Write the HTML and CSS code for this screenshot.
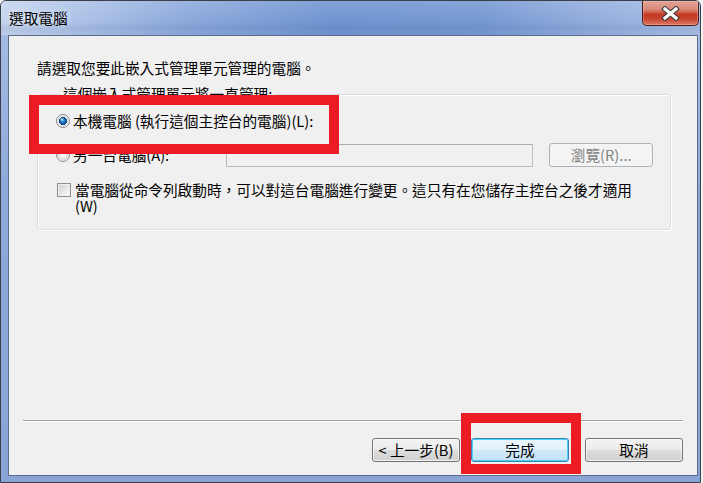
FILE: index.html
```html
<!DOCTYPE html>
<html lang="zh-Hant">
<head>
    <meta charset="UTF-8">
    <meta name="viewport" content="width=device-width, initial-scale=1.0">
    <title>選取電腦</title>
    <link rel="stylesheet" href="styles.css">
</head>
<body>
    <div class="window">
        <div class="titlebar">
            <span class="title">選取電腦</span>
            <div class="close">
                <svg width="19" height="15" viewBox="0 0 19 15">
                    <path d="M4 3 L15 12 M15 3 L4 12" stroke="#3d3d3d" stroke-width="5.4" stroke-linecap="square"/>
                    <path d="M4 3 L15 12 M15 3 L4 12" stroke="#ffffff" stroke-width="3.2" stroke-linecap="square"/>
                </svg>
            </div>
        </div>
        <div class="frame">
            <div class="client">
                <p class="lead">請選取您要此嵌入式管理單元管理的電腦。</p>

                <fieldset class="group">
                    <legend>這個嵌入式管理單元將一直管理:</legend>

                    <div class="option">
                        <input type="radio" name="target" class="radio" checked>
                        <label>本機電腦 (執行這個主控台的電腦)(L):</label>
                    </div>

                    <div class="option remote">
                        <input type="radio" name="target" class="radio">
                        <label class="remote-label">另一台電腦(A):</label>
                        <input type="text" class="field" disabled>
                        <button class="btn browse" disabled>瀏覽(R)...</button>
                    </div>

                    <div class="check-row">
                        <input type="checkbox" class="check">
                        <label>當電腦從命令列啟動時，可以對這台電腦進行變更。這只有在您儲存主控台之後才適用 (W)</label>
                    </div>
                </fieldset>

                <hr class="sep">

                <div class="buttons">
                    <button class="btn back">&lt; 上一步(B)</button>
                    <button class="btn finish default">完成</button>
                    <button class="btn cancel">取消</button>
                </div>
            </div>
        </div>

        <div class="mark mark-local"></div>
        <div class="mark mark-finish"></div>
    </div>
</body>
</html>
```

FILE: styles.css
```css
* {
    box-sizing: border-box;
}

body {
    margin: 0;
    background-color: #f3f3f3;
    font-family: "Noto Sans CJK TC", "Liberation Sans", sans-serif;
    font-size: 11pt;
    color: #000;
}

.window {
    position: relative;
    width: 701px;
    height: 483px;
    border: 1px solid #3a3f4a;
    border-radius: 6px 6px 0 0;
    background: linear-gradient(180deg, #a9bfe5 0%, #8ea8da 40%, #8aa4d8 100%);
    display: flex;
    flex-direction: column;
    overflow: hidden;
}

.titlebar {
    height: 34px;
    display: flex;
    align-items: flex-start;
    padding-left: 8px;
    background:
        linear-gradient(180deg, rgba(255, 255, 255, 0.12) 0, rgba(255, 255, 255, 0) 20px, rgba(70, 95, 150, 0.14) 27px, rgba(70, 95, 150, 0.05) 34px),
        linear-gradient(90deg, #c6d5ee 0, #b3c7e9 60px, #8eaadc 180px, #7095d0 330px, #7699d2 480px, #90abdc 580px, #a9bfe5 700px);
}

.title {
    margin-top: 8px;
    line-height: 18px;
    text-shadow: 0 0 6px rgba(255, 255, 255, 0.8);
}

.close {
    margin-left: auto;
    margin-right: 1px;
    width: 57px;
    height: 25px;
    border: 1px solid #4a1c16;
    border-top: none;
    border-radius: 0 0 5px 5px;
    display: flex;
    align-items: center;
    justify-content: center;
    background: linear-gradient(180deg, #e3a596 0%, #d88877 35%, #cd5a45 48%, #c23a25 55%, #c8442e 75%, #dd7a66 100%);
    box-shadow: inset 0 0 0 1px rgba(255, 200, 190, 0.35);
}

.frame {
    flex: 1;
    padding: 0 2px 6px 7px;
}

.client {
    width: 690px;
    height: 441px;
    border: 1px solid #5c6b88;
    background-color: #f0f0f0;
    display: flex;
    flex-direction: column;
    padding: 0 14px 13px 14px;
}

.lead {
    margin: 23px 0 0 14px;
    line-height: 18px;
}

.group {
    margin: 8px 12px 0 14px;
    padding: 9px 17px 15px 18px;
    border: 1px solid #d5dfe5;
    border-radius: 3px;
    box-shadow: inset 1px 1px 0 #fff, 1px 1px 0 #fff;
    min-width: 0;
}

.group legend {
    padding: 0 2px;
    margin-left: 5px;
    line-height: 18px;
}

.option {
    display: flex;
    align-items: center;
    gap: 3px;
    line-height: 18px;
}

.option.remote {
    margin-top: 13px;
    height: 24px;
}

.remote-label {
    width: 151px;
}

.radio {
    appearance: none;
    width: 14px;
    height: 14px;
    margin: 0;
    border: 1px solid #8b8c8c;
    border-radius: 50%;
    background: radial-gradient(circle at center, #fbfbfb 0, #f2f2f2 2.5px, #d9d9d9 4.8px, #f6f6f6 6px);
    flex: none;
}

.radio:checked {
    background:
        radial-gradient(circle at 5px 4.5px, rgba(215, 245, 255, 0.95) 0, rgba(120, 200, 255, 0) 2.2px),
        radial-gradient(circle at center, #3a97e2 0, #1d67b8 2.5px, #0c3a74 3.9px, rgba(12, 58, 116, 0) 4.3px),
        radial-gradient(circle at center, #fbfbfb 0, #f4f4f4 4.3px, #d9d9d9 5px, #f6f6f6 6px);
}

.field {
    width: 308px;
    height: 23px;
    margin: 0;
    border: 1px solid #bcbcbc;
    border-top-color: #ababab;
    background-color: #f0f0f0;
}

.check-row {
    margin-top: 15px;
    display: flex;
    align-items: flex-start;
    gap: 4px;
    line-height: 16px;
    padding-left: 1px;
}

.check-row label {
    width: 574px;
}

.check {
    appearance: none;
    width: 14px;
    height: 14px;
    margin: 1px 0 0 0;
    border: 1px solid #8e8f8f;
    background: linear-gradient(135deg, #d2d2d2 0%, #e6e6e6 50%, #fbfbfb 100%) content-box;
    padding: 1px;
    background-color: #f6f6f6;
    flex: none;
}

.sep {
    margin: auto 0 16px 0;
    border: none;
    border-top: 1px solid #a0a0a0;
    border-bottom: 1px solid #ffffff;
    height: 0;
}

.buttons {
    display: flex;
    justify-content: flex-end;
    height: 24px;
}

.btn {
    height: 24px;
    padding: 0;
    border: 1px solid #707070;
    border-radius: 3px;
    font-family: "Noto Sans CJK TC", "Liberation Sans", sans-serif;
    font-size: 11pt;
    line-height: 18px;
    color: #000;
    background: linear-gradient(180deg, #f3f3f3 0%, #ebebeb 48%, #dddddd 52%, #cfcfcf 100%);
    box-shadow: inset 0 0 0 1px rgba(255, 255, 255, 0.75);
}

.btn.back {
    width: 88px;
}

.btn.finish {
    width: 98px;
    margin-left: 11px;
}

.btn.cancel {
    width: 98px;
    margin-left: 16px;
}

.btn.default {
    border-color: #3c7fb1;
    box-shadow: inset 0 0 0 1px #48d4fd;
    background: linear-gradient(180deg, #eaf6fd 0%, #e2f1fb 48%, #d1e9f8 52%, #c4e2f6 100%);
}

.btn.browse {
    width: 104px;
    margin-left: 13px;
    border-color: #adb2b5;
    background: #f4f4f4;
    box-shadow: none;
    color: #838383;
}

.mark {
    position: absolute;
    border: 10px solid #ed1c24;
}

.mark-local {
    left: 28px;
    top: 94px;
    width: 310px;
    height: 59px;
}

.mark-finish {
    left: 460px;
    top: 412px;
    width: 120px;
    height: 61px;
}
```
